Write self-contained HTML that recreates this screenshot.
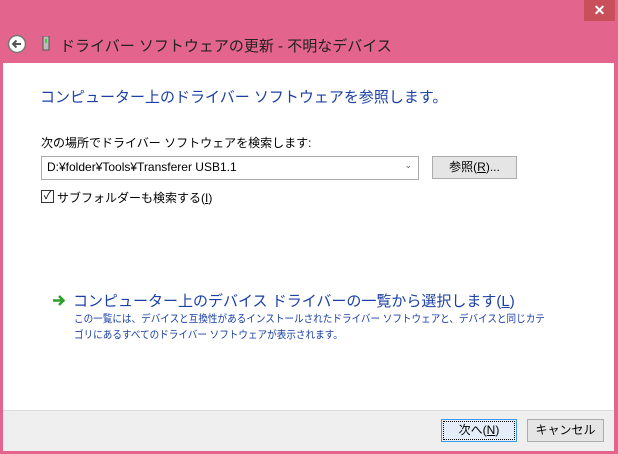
<!DOCTYPE html>
<html><head><meta charset="utf-8"><style>
body{margin:0;width:618px;height:454px;background:#e3648c;position:relative;overflow:hidden;font-family:"Liberation Sans","Noto Sans CJK JP",sans-serif;font-size:12px;color:#000}
.abs{position:absolute}
#close{left:584px;top:0;width:31px;height:21px;background:#c9505a;color:#fff;text-align:center;font-size:14px;line-height:20px;font-weight:bold}
#content{left:3px;top:63px;width:611px;height:347px;background:#fff}
#foot{left:3px;top:410px;width:611px;height:40px;background:#efefef;border-top:1px solid #dcdcdc}
.btn{position:absolute;height:21px;border:1px solid #acacac;background:#e5e5e5;text-align:center;line-height:21px;font-size:12px}
u{text-decoration:underline}
</style></head><body>
<div class="abs" id="close">✕</div>
<svg class="abs" style="left:7px;top:34px" width="20" height="20"><circle cx="10" cy="10" r="8.5" fill="#fff" stroke="#777" stroke-width="1.5"/><path d="M14 10H6M9.5 6.5L6 10l3.5 3.5" stroke="#555" stroke-width="2" fill="none"/></svg>
<svg class="abs" style="left:42px;top:36px" width="8" height="15"><rect x="1" y="0" width="6" height="14" fill="#bbb" stroke="#555"/><rect x="3" y="3" width="2" height="4" fill="#4c4"/></svg>
<div class="abs" style="left:60px;top:35px;font-size:15px;color:#222">ドライバー ソフトウェアの更新 - 不明なデバイス</div>
<div class="abs" id="content"></div>
<div class="abs" style="left:40px;top:86px;font-size:15px;color:#1a3fa6">コンピューター上のドライバー ソフトウェアを参照します。</div>
<div class="abs" style="left:41px;top:134px">次の場所でドライバー ソフトウェアを検索します:</div>
<div class="abs" style="left:41px;top:156px;width:376px;height:22px;border:1px solid #aaa;background:#fff"><span style="position:absolute;left:5px;top:3px">D:¥folder¥Tools¥Transferer USB1.1</span><span style="position:absolute;right:6px;top:3px;color:#666;font-size:9px">&#8964;</span></div>
<div class="btn" style="left:432px;top:156px;width:83px">参照(<u>R</u>)...</div>
<div class="abs" style="left:41px;top:190px;width:11px;height:11px;border:1px solid #333;background:#fff;font-size:11px;line-height:11px;text-align:center">✓</div>
<div class="abs" style="left:57px;top:189px">サブフォルダーも検索する(<u>I</u>)</div>
<svg class="abs" style="left:52px;top:294px" width="14" height="13"><path d="M1 6.5H11M7 2l4.5 4.5L7 11" stroke="#2aa02a" stroke-width="2.5" fill="none"/></svg>
<div class="abs" style="left:73px;top:290px;font-size:15px;color:#1a3fa6">コンピューター上のデバイス ドライバーの一覧から選択します(<u>L</u>)</div>
<div class="abs" style="left:74px;top:311px;white-space:nowrap;line-height:16px;color:#1a3fa6;font-size:10.5px;transform:scaleX(0.913);transform-origin:0 0">この一覧には、デバイスと互換性があるインストールされたドライバー ソフトウェアと、デバイスと同じカテ<br>ゴリにあるすべてのドライバー ソフトウェアが表示されます。</div>
<div class="abs" id="foot"></div>
<div class="btn" style="left:441px;top:419px;width:74px;border:1px solid #3c9ae8;outline:1px dotted #000;outline-offset:-3px;background:#e5eef8">次へ(<u>N</u>)</div>
<div class="btn" style="left:527px;top:419px;width:75px">キャンセル</div>
</body></html>
